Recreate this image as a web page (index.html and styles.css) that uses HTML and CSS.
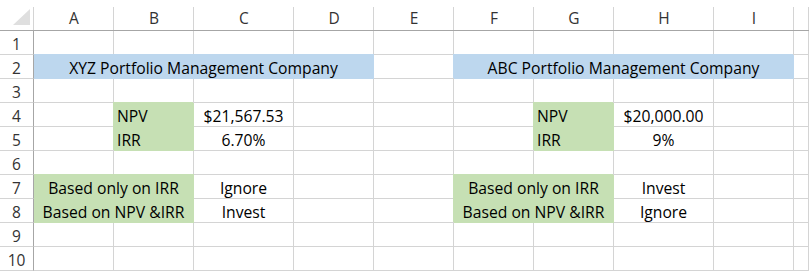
FILE: index.html
```html
<!DOCTYPE html>
<html lang="en">
<head>
<meta charset="utf-8">
<title>Portfolio comparison</title>
<link rel="stylesheet" href="styles.css">
</head>
<body>
<div class="sheet">
  <div class="hd corner"><svg class="tri" width="20" height="20" viewBox="0 0 20 20"><polygon points="1,17 18,17 18,1" fill="#dfdfdf"/></svg></div>
  <div class="hd">A</div><div class="hd">B</div><div class="hd">C</div><div class="hd">D</div><div class="hd">E</div><div class="hd">F</div><div class="hd">G</div><div class="hd">H</div><div class="hd">I</div><div class="hd last"></div>

  <div class="rh">1</div><div class="c"></div><div class="c"></div><div class="c"></div><div class="c"></div><div class="c"></div><div class="c"></div><div class="c"></div><div class="c"></div><div class="c"></div><div class="c"></div>

  <div class="rh">2</div><div class="c blue span4 edge">XYZ Portfolio Management Company</div><div class="c"></div><div class="c blue span4">ABC Portfolio Management Company</div><div class="c"></div>

  <div class="rh">3</div><div class="c"></div><div class="c"></div><div class="c"></div><div class="c"></div><div class="c"></div><div class="c"></div><div class="c"></div><div class="c"></div><div class="c"></div><div class="c"></div>

  <div class="rh">4</div><div class="c"></div><div class="c green left">NPV</div><div class="c">$21,567.53</div><div class="c"></div><div class="c"></div><div class="c"></div><div class="c green left">NPV</div><div class="c">$20,000.00</div><div class="c"></div><div class="c"></div>

  <div class="rh">5</div><div class="c"></div><div class="c green left">IRR</div><div class="c">6.70%</div><div class="c"></div><div class="c"></div><div class="c"></div><div class="c green left">IRR</div><div class="c">9%</div><div class="c"></div><div class="c"></div>

  <div class="rh">6</div><div class="c"></div><div class="c"></div><div class="c"></div><div class="c"></div><div class="c"></div><div class="c"></div><div class="c"></div><div class="c"></div><div class="c"></div><div class="c"></div>

  <div class="rh">7</div><div class="c green span2 edge">Based only on IRR</div><div class="c">Ignore</div><div class="c"></div><div class="c"></div><div class="c green span2">Based only on IRR</div><div class="c">Invest</div><div class="c"></div><div class="c"></div>

  <div class="rh">8</div><div class="c green span2 edge">Based on NPV &amp;IRR</div><div class="c">Invest</div><div class="c"></div><div class="c"></div><div class="c green span2">Based on NPV &amp;IRR</div><div class="c">Ignore</div><div class="c"></div><div class="c"></div>

  <div class="rh">9</div><div class="c"></div><div class="c"></div><div class="c"></div><div class="c"></div><div class="c"></div><div class="c"></div><div class="c"></div><div class="c"></div><div class="c"></div><div class="c"></div>

  <div class="rh">10</div><div class="c"></div><div class="c"></div><div class="c"></div><div class="c"></div><div class="c"></div><div class="c"></div><div class="c"></div><div class="c"></div><div class="c"></div><div class="c"></div>
</div>
</body>
</html>
```

FILE: styles.css
```css
html, body {
  margin: 0;
  padding: 0;
  background: #fff;
  overflow: hidden;
}

.sheet {
  display: grid;
  grid-template-columns: 34px 80px 80px 100px 80px 80px 80px 80px 100px 80px 15px;
  grid-template-rows: 31px repeat(10, 24px);
  width: 809px;
  font-family: "Open Sans", "Liberation Sans", sans-serif;
  font-size: 15.7px;
  color: #000;
}

.c, .hd, .rh {
  box-sizing: border-box;
  display: flex;
  align-items: flex-end;
  justify-content: center;
  white-space: nowrap;
  overflow: hidden;
  line-height: 18px;
}

.c {
  border-right: 1px solid #d4d4d4;
  border-bottom: 1px solid #d4d4d4;
  padding: 0 3px 1px;
}

.hd {
  font-size: 15.5px;
  color: #333;
  border-bottom: 1px solid #a6a6a6;
  padding-bottom: 3px;
  background: linear-gradient(#d4d4d4, #d4d4d4) no-repeat right bottom / 1px 23px;
}

.hd.corner {
  align-items: flex-end;
  justify-content: flex-end;
  padding: 0 2px 2px 0;
}

.tri {
  display: block;
}

.rh {
  font-size: 15.5px;
  color: #333;
  border-right: 1px solid #a6a6a6;
  border-bottom: 1px solid #d4d4d4;
  padding-bottom: 1px;
}

.span4 { grid-column: span 4; }
.span2 { grid-column: span 2; }
.left { justify-content: flex-start; }

.blue {
  background: #bdd7ee;
  border-color: #bdd7ee;
  box-shadow: -1px -1px 0 0 #bdd7ee;
}

.green {
  background: #c6e0b4;
  border-color: #c6e0b4;
  box-shadow: -1px -1px 0 0 #c6e0b4;
}

.blue.edge { box-shadow: 0 -1px 0 0 #bdd7ee; }
.green.edge { box-shadow: 0 -1px 0 0 #c6e0b4; }
```
